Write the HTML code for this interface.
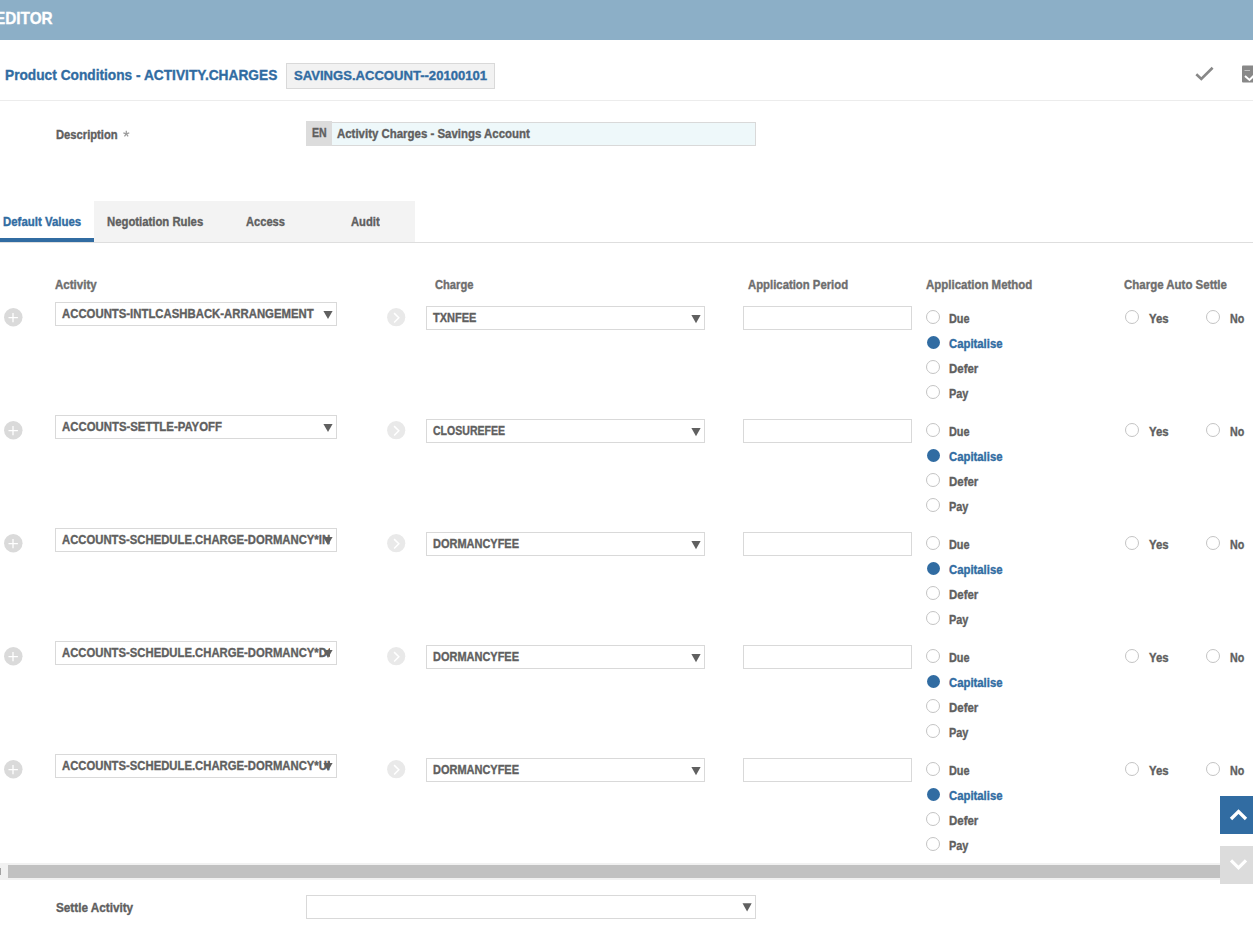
<!DOCTYPE html>
<html><head><meta charset="utf-8"><title>Editor</title><style>
*{margin:0;padding:0;box-sizing:border-box}
html,body{width:1253px;height:931px;overflow:hidden;background:#fff}
body{position:relative;font-family:"Liberation Sans",sans-serif;font-weight:bold;font-size:12px;color:#5a5a5a}
.a{position:absolute;white-space:nowrap}
.t{position:absolute;white-space:nowrap;line-height:1;-webkit-text-stroke:0.35px currentColor}
.hdr{left:0;top:0;width:1253px;height:40px;background:#8baec6}
.box{position:absolute;border:1px solid #d9d9d9;background:#fff}
.tri{position:absolute;width:0;height:0;border-left:4.6px solid transparent;border-right:4.6px solid transparent;border-top:7.8px solid #5e5e5e}
.rad{position:absolute;width:14px;height:14px;border-radius:50%;border:1px solid #c4c4c4;background:#fff}
.radf{position:absolute;width:13px;height:13px;border-radius:50%;background:#316ca2}
.plus{position:absolute;width:18px;height:18px;border-radius:50%;background:#dadada}
.plus:before{content:"";position:absolute;left:4.5px;top:8px;width:9px;height:2px;background:#fff}
.plus:after{content:"";position:absolute;left:8px;top:4.5px;width:2px;height:9px;background:#fff}
.chev{position:absolute;width:18px;height:18px;border-radius:50%;background:#e9e9e9}
</style></head><body>
<div class="a" style="left:0px;top:0px;width:1253px;height:40px;background:#8cafc7"></div>
<div class="t" style="left:-5.20px;top:10.41px;font-size:17px;color:#fff;transform:scaleX(0.9014);transform-origin:0 0;">EDITOR</div>
<div class="t" style="left:5.40px;top:66.90px;font-size:15px;color:#316ca2;transform:scaleX(0.9144);transform-origin:0 0;">Product Conditions - ACTIVITY.CHARGES</div>
<div class="a" style="left:286px;top:63px;width:209px;height:26px;background:#f2f2f2;border:1px solid #d9d9d9"></div>
<div class="t" style="left:294.00px;top:69.10px;font-size:13px;color:#316ca2;transform:scaleX(1.0057);transform-origin:0 0;">SAVINGS.ACCOUNT--20100101</div>
<div class="a" style="left:0px;top:100px;width:1253px;height:1px;background:#ececec"></div>
<svg class="a" style="left:1190px;top:62px" width="30" height="24" viewBox="0 0 30 24"><path d="M6.3 12.3 L11.3 16.9 L22.6 5.8" fill="none" stroke="#888" stroke-width="2.6"/></svg>
<svg class="a" style="left:1240px;top:64px" width="13" height="20" viewBox="0 0 13 20"><rect x="2" y="1.5" width="14" height="17" rx="1" fill="#888"/><path d="M4.5 6.5 H10" stroke="#fff" stroke-width="0.8" opacity="0.6"/><path d="M5 12 L9.5 16 L14 11.5" fill="none" stroke="#fff" stroke-width="2"/></svg>
<div class="t" style="left:56.30px;top:129.44px;font-size:12px;color:#5f5f5f;transform:scaleX(0.9333);transform-origin:0 0;">Description</div>
<svg class="a" style="left:120px;top:128px" width="12" height="12" viewBox="0 0 12 12"><g transform="translate(6.3 5.9)" stroke="#9c9c9c" stroke-width="1.25" stroke-linecap="butt"><path d="M0 0V-3.1M0 0L2.95 -0.96M0 0L1.82 2.5M0 0L-1.82 2.5M0 0L-2.95 -0.96"/></g></svg>
<div class="a" style="left:306px;top:121px;width:26px;height:25px;background:#dcdcdc"></div>
<div class="t" style="left:312.20px;top:127.44px;font-size:12px;color:#5f5f5f;transform:scaleX(0.8802);transform-origin:0 0;">EN</div>
<div class="a" style="left:332px;top:122px;width:424px;height:24px;background:#eef8fa;border:1px solid #d9d9d9;border-left:0"></div>
<div class="t" style="left:337.20px;top:128.04px;font-size:12px;color:#5f5f5f;transform:scaleX(0.9530);transform-origin:0 0;">Activity Charges - Savings Account</div>
<div class="a" style="left:94px;top:201px;width:321px;height:41px;background:#f3f3f3"></div>
<div class="a" style="left:0px;top:242px;width:1253px;height:1px;background:#dedede"></div>
<div class="a" style="left:0px;top:238px;width:94px;height:4px;background:#316ca2"></div>
<div class="t" style="left:2.90px;top:216.44px;font-size:12px;color:#316ca2;transform:scaleX(0.9524);transform-origin:0 0;">Default Values</div>
<div class="t" style="left:106.60px;top:216.44px;font-size:12px;color:#5f5f5f;transform:scaleX(0.9431);transform-origin:0 0;">Negotiation Rules</div>
<div class="t" style="left:246.00px;top:216.44px;font-size:12px;color:#5f5f5f;transform:scaleX(0.9262);transform-origin:0 0;">Access</div>
<div class="t" style="left:351.30px;top:216.44px;font-size:12px;color:#5f5f5f;transform:scaleX(0.9349);transform-origin:0 0;">Audit</div>
<div class="t" style="left:55.10px;top:279.44px;font-size:12px;color:#6e6e6e;transform:scaleX(0.9608);transform-origin:0 0;">Activity</div>
<div class="t" style="left:435.20px;top:279.44px;font-size:12px;color:#6e6e6e;transform:scaleX(0.9298);transform-origin:0 0;">Charge</div>
<div class="t" style="left:748.40px;top:279.44px;font-size:12px;color:#6e6e6e;transform:scaleX(0.9443);transform-origin:0 0;">Application Period</div>
<div class="t" style="left:926.30px;top:279.44px;font-size:12px;color:#6e6e6e;transform:scaleX(0.9551);transform-origin:0 0;">Application Method</div>
<div class="t" style="left:1123.50px;top:279.44px;font-size:12px;color:#6e6e6e;transform:scaleX(0.9563);transform-origin:0 0;">Charge Auto Settle</div>
<svg class="a" style="left:4.4px;top:308.1px" width="19" height="19" viewBox="0 0 19 19"><circle cx="9.3" cy="9.3" r="9.25" fill="#dadada"/><path d="M4.5 9.6 H13.9 M9.0 4.9 V14.3" fill="none" stroke="#fff" stroke-width="1.3"/></svg>
<div class="box" style="left:55px;top:302px;width:282px;height:24px;overflow:hidden"></div>
<div class="a" style="left:56px;top:306.24px;width:274px;height:16px;overflow:hidden"><div class="t" style="left:61.90px;top:308.24px;font-size:12px;color:#5f5f5f;transform:scaleX(0.9462);transform-origin:0 0;left:5.90px;top:2px">ACCOUNTS-INTLCASHBACK-ARRANGEMENT</div></div>
<svg class="a" style="left:323px;top:310px" width="11" height="10"><polygon points="0.40,0.90 9.60,0.90 5.00,9.10" fill="#606060"/></svg>
<svg class="a" style="left:386.6px;top:308.1px" width="19" height="19" viewBox="0 0 19 19"><circle cx="9.2" cy="9.2" r="9.1" fill="#e9e9e9"/><path d="M7.1 5.1 L11.8 9.8 L7.1 14.5" fill="none" stroke="#fff" stroke-width="1.5"/></svg>
<div class="box" style="left:426px;top:306px;width:279px;height:24px"></div>
<div class="t" style="left:433.40px;top:312.34px;font-size:12px;color:#5f5f5f;transform:scaleX(0.9154);transform-origin:0 0;">TXNFEE</div>
<svg class="a" style="left:691px;top:315px" width="11" height="10"><polygon points="0.40,0.10 9.60,0.10 5.00,8.30" fill="#606060"/></svg>
<div class="box" style="left:743px;top:306px;width:169px;height:24px"></div>
<div class="rad" style="left:926px;top:310px"></div>
<div class="t" style="left:949.40px;top:312.94px;font-size:12px;color:#5f5f5f;transform:scaleX(0.9075);transform-origin:0 0;">Due</div>
<div class="radf" style="left:926.5px;top:335.5px"></div>
<div class="t" style="left:949.40px;top:337.94px;font-size:12px;color:#316ca2;transform:scaleX(0.9436);transform-origin:0 0;">Capitalise</div>
<div class="rad" style="left:926px;top:360px"></div>
<div class="t" style="left:949.40px;top:362.94px;font-size:12px;color:#5f5f5f;transform:scaleX(0.9544);transform-origin:0 0;">Defer</div>
<div class="rad" style="left:926px;top:385px"></div>
<div class="t" style="left:949.40px;top:387.94px;font-size:12px;color:#5f5f5f;transform:scaleX(0.9112);transform-origin:0 0;">Pay</div>
<div class="rad" style="left:1125px;top:310px"></div>
<div class="t" style="left:1148.60px;top:312.94px;font-size:12px;color:#5f5f5f;transform:scaleX(0.9469);transform-origin:0 0;">Yes</div>
<div class="rad" style="left:1206px;top:310px"></div>
<div class="t" style="left:1229.80px;top:312.94px;font-size:12px;color:#5f5f5f;transform:scaleX(0.8938);transform-origin:0 0;">No</div>
<svg class="a" style="left:4.4px;top:421.1px" width="19" height="19" viewBox="0 0 19 19"><circle cx="9.3" cy="9.3" r="9.25" fill="#dadada"/><path d="M4.5 9.6 H13.9 M9.0 4.9 V14.3" fill="none" stroke="#fff" stroke-width="1.3"/></svg>
<div class="box" style="left:55px;top:415px;width:282px;height:24px;overflow:hidden"></div>
<div class="a" style="left:56px;top:419.24px;width:274px;height:16px;overflow:hidden"><div class="t" style="left:61.90px;top:421.24px;font-size:12px;color:#5f5f5f;transform:scaleX(0.9484);transform-origin:0 0;left:5.90px;top:2px">ACCOUNTS-SETTLE-PAYOFF</div></div>
<svg class="a" style="left:323px;top:423px" width="11" height="10"><polygon points="0.40,0.90 9.60,0.90 5.00,9.10" fill="#606060"/></svg>
<svg class="a" style="left:386.6px;top:421.1px" width="19" height="19" viewBox="0 0 19 19"><circle cx="9.2" cy="9.2" r="9.1" fill="#e9e9e9"/><path d="M7.1 5.1 L11.8 9.8 L7.1 14.5" fill="none" stroke="#fff" stroke-width="1.5"/></svg>
<div class="box" style="left:426px;top:419px;width:279px;height:24px"></div>
<div class="t" style="left:433.40px;top:425.34px;font-size:12px;color:#5f5f5f;transform:scaleX(0.8780);transform-origin:0 0;">CLOSUREFEE</div>
<svg class="a" style="left:691px;top:428px" width="11" height="10"><polygon points="0.40,0.10 9.60,0.10 5.00,8.30" fill="#606060"/></svg>
<div class="box" style="left:743px;top:419px;width:169px;height:24px"></div>
<div class="rad" style="left:926px;top:423px"></div>
<div class="t" style="left:949.40px;top:425.94px;font-size:12px;color:#5f5f5f;transform:scaleX(0.9075);transform-origin:0 0;">Due</div>
<div class="radf" style="left:926.5px;top:448.5px"></div>
<div class="t" style="left:949.40px;top:450.94px;font-size:12px;color:#316ca2;transform:scaleX(0.9436);transform-origin:0 0;">Capitalise</div>
<div class="rad" style="left:926px;top:473px"></div>
<div class="t" style="left:949.40px;top:475.94px;font-size:12px;color:#5f5f5f;transform:scaleX(0.9544);transform-origin:0 0;">Defer</div>
<div class="rad" style="left:926px;top:498px"></div>
<div class="t" style="left:949.40px;top:500.94px;font-size:12px;color:#5f5f5f;transform:scaleX(0.9112);transform-origin:0 0;">Pay</div>
<div class="rad" style="left:1125px;top:423px"></div>
<div class="t" style="left:1148.60px;top:425.94px;font-size:12px;color:#5f5f5f;transform:scaleX(0.9469);transform-origin:0 0;">Yes</div>
<div class="rad" style="left:1206px;top:423px"></div>
<div class="t" style="left:1229.80px;top:425.94px;font-size:12px;color:#5f5f5f;transform:scaleX(0.8938);transform-origin:0 0;">No</div>
<svg class="a" style="left:4.4px;top:534.1px" width="19" height="19" viewBox="0 0 19 19"><circle cx="9.3" cy="9.3" r="9.25" fill="#dadada"/><path d="M4.5 9.6 H13.9 M9.0 4.9 V14.3" fill="none" stroke="#fff" stroke-width="1.3"/></svg>
<div class="box" style="left:55px;top:528px;width:282px;height:24px;overflow:hidden"></div>
<div class="a" style="left:56px;top:532.24px;width:274px;height:16px;overflow:hidden"><div class="t" style="left:61.90px;top:534.24px;font-size:12px;color:#5f5f5f;transform:scaleX(0.9417);transform-origin:0 0;left:5.90px;top:2px">ACCOUNTS-SCHEDULE.CHARGE-DORMANCY*INT</div></div>
<svg class="a" style="left:323px;top:536px" width="11" height="10"><polygon points="0.40,0.90 9.60,0.90 5.00,9.10" fill="#606060"/></svg>
<svg class="a" style="left:386.6px;top:534.1px" width="19" height="19" viewBox="0 0 19 19"><circle cx="9.2" cy="9.2" r="9.1" fill="#e9e9e9"/><path d="M7.1 5.1 L11.8 9.8 L7.1 14.5" fill="none" stroke="#fff" stroke-width="1.5"/></svg>
<div class="box" style="left:426px;top:532px;width:279px;height:24px"></div>
<div class="t" style="left:433.40px;top:538.34px;font-size:12px;color:#5f5f5f;transform:scaleX(0.9149);transform-origin:0 0;">DORMANCYFEE</div>
<svg class="a" style="left:691px;top:541px" width="11" height="10"><polygon points="0.40,0.10 9.60,0.10 5.00,8.30" fill="#606060"/></svg>
<div class="box" style="left:743px;top:532px;width:169px;height:24px"></div>
<div class="rad" style="left:926px;top:536px"></div>
<div class="t" style="left:949.40px;top:538.94px;font-size:12px;color:#5f5f5f;transform:scaleX(0.9075);transform-origin:0 0;">Due</div>
<div class="radf" style="left:926.5px;top:561.5px"></div>
<div class="t" style="left:949.40px;top:563.94px;font-size:12px;color:#316ca2;transform:scaleX(0.9436);transform-origin:0 0;">Capitalise</div>
<div class="rad" style="left:926px;top:586px"></div>
<div class="t" style="left:949.40px;top:588.94px;font-size:12px;color:#5f5f5f;transform:scaleX(0.9544);transform-origin:0 0;">Defer</div>
<div class="rad" style="left:926px;top:611px"></div>
<div class="t" style="left:949.40px;top:613.94px;font-size:12px;color:#5f5f5f;transform:scaleX(0.9112);transform-origin:0 0;">Pay</div>
<div class="rad" style="left:1125px;top:536px"></div>
<div class="t" style="left:1148.60px;top:538.94px;font-size:12px;color:#5f5f5f;transform:scaleX(0.9469);transform-origin:0 0;">Yes</div>
<div class="rad" style="left:1206px;top:536px"></div>
<div class="t" style="left:1229.80px;top:538.94px;font-size:12px;color:#5f5f5f;transform:scaleX(0.8938);transform-origin:0 0;">No</div>
<svg class="a" style="left:4.4px;top:647.1px" width="19" height="19" viewBox="0 0 19 19"><circle cx="9.3" cy="9.3" r="9.25" fill="#dadada"/><path d="M4.5 9.6 H13.9 M9.0 4.9 V14.3" fill="none" stroke="#fff" stroke-width="1.3"/></svg>
<div class="box" style="left:55px;top:641px;width:282px;height:24px;overflow:hidden"></div>
<div class="a" style="left:56px;top:645.24px;width:274px;height:16px;overflow:hidden"><div class="t" style="left:61.90px;top:647.24px;font-size:12px;color:#5f5f5f;transform:scaleX(0.9417);transform-origin:0 0;left:5.90px;top:2px">ACCOUNTS-SCHEDULE.CHARGE-DORMANCY*DOR</div></div>
<svg class="a" style="left:323px;top:649px" width="11" height="10"><polygon points="0.40,0.90 9.60,0.90 5.00,9.10" fill="#606060"/></svg>
<svg class="a" style="left:386.6px;top:647.1px" width="19" height="19" viewBox="0 0 19 19"><circle cx="9.2" cy="9.2" r="9.1" fill="#e9e9e9"/><path d="M7.1 5.1 L11.8 9.8 L7.1 14.5" fill="none" stroke="#fff" stroke-width="1.5"/></svg>
<div class="box" style="left:426px;top:645px;width:279px;height:24px"></div>
<div class="t" style="left:433.40px;top:651.34px;font-size:12px;color:#5f5f5f;transform:scaleX(0.9149);transform-origin:0 0;">DORMANCYFEE</div>
<svg class="a" style="left:691px;top:654px" width="11" height="10"><polygon points="0.40,0.10 9.60,0.10 5.00,8.30" fill="#606060"/></svg>
<div class="box" style="left:743px;top:645px;width:169px;height:24px"></div>
<div class="rad" style="left:926px;top:649px"></div>
<div class="t" style="left:949.40px;top:651.94px;font-size:12px;color:#5f5f5f;transform:scaleX(0.9075);transform-origin:0 0;">Due</div>
<div class="radf" style="left:926.5px;top:674.5px"></div>
<div class="t" style="left:949.40px;top:676.94px;font-size:12px;color:#316ca2;transform:scaleX(0.9436);transform-origin:0 0;">Capitalise</div>
<div class="rad" style="left:926px;top:699px"></div>
<div class="t" style="left:949.40px;top:701.94px;font-size:12px;color:#5f5f5f;transform:scaleX(0.9544);transform-origin:0 0;">Defer</div>
<div class="rad" style="left:926px;top:724px"></div>
<div class="t" style="left:949.40px;top:726.94px;font-size:12px;color:#5f5f5f;transform:scaleX(0.9112);transform-origin:0 0;">Pay</div>
<div class="rad" style="left:1125px;top:649px"></div>
<div class="t" style="left:1148.60px;top:651.94px;font-size:12px;color:#5f5f5f;transform:scaleX(0.9469);transform-origin:0 0;">Yes</div>
<div class="rad" style="left:1206px;top:649px"></div>
<div class="t" style="left:1229.80px;top:651.94px;font-size:12px;color:#5f5f5f;transform:scaleX(0.8938);transform-origin:0 0;">No</div>
<svg class="a" style="left:4.4px;top:760.1px" width="19" height="19" viewBox="0 0 19 19"><circle cx="9.3" cy="9.3" r="9.25" fill="#dadada"/><path d="M4.5 9.6 H13.9 M9.0 4.9 V14.3" fill="none" stroke="#fff" stroke-width="1.3"/></svg>
<div class="box" style="left:55px;top:754px;width:282px;height:24px;overflow:hidden"></div>
<div class="a" style="left:56px;top:758.24px;width:274px;height:16px;overflow:hidden"><div class="t" style="left:61.90px;top:760.24px;font-size:12px;color:#5f5f5f;transform:scaleX(0.9417);transform-origin:0 0;left:5.90px;top:2px">ACCOUNTS-SCHEDULE.CHARGE-DORMANCY*UNC</div></div>
<svg class="a" style="left:323px;top:762px" width="11" height="10"><polygon points="0.40,0.90 9.60,0.90 5.00,9.10" fill="#606060"/></svg>
<svg class="a" style="left:386.6px;top:760.1px" width="19" height="19" viewBox="0 0 19 19"><circle cx="9.2" cy="9.2" r="9.1" fill="#e9e9e9"/><path d="M7.1 5.1 L11.8 9.8 L7.1 14.5" fill="none" stroke="#fff" stroke-width="1.5"/></svg>
<div class="box" style="left:426px;top:758px;width:279px;height:24px"></div>
<div class="t" style="left:433.40px;top:764.34px;font-size:12px;color:#5f5f5f;transform:scaleX(0.9149);transform-origin:0 0;">DORMANCYFEE</div>
<svg class="a" style="left:691px;top:767px" width="11" height="10"><polygon points="0.40,0.10 9.60,0.10 5.00,8.30" fill="#606060"/></svg>
<div class="box" style="left:743px;top:758px;width:169px;height:24px"></div>
<div class="rad" style="left:926px;top:762px"></div>
<div class="t" style="left:949.40px;top:764.94px;font-size:12px;color:#5f5f5f;transform:scaleX(0.9075);transform-origin:0 0;">Due</div>
<div class="radf" style="left:926.5px;top:787.5px"></div>
<div class="t" style="left:949.40px;top:789.94px;font-size:12px;color:#316ca2;transform:scaleX(0.9436);transform-origin:0 0;">Capitalise</div>
<div class="rad" style="left:926px;top:812px"></div>
<div class="t" style="left:949.40px;top:814.94px;font-size:12px;color:#5f5f5f;transform:scaleX(0.9544);transform-origin:0 0;">Defer</div>
<div class="rad" style="left:926px;top:837px"></div>
<div class="t" style="left:949.40px;top:839.94px;font-size:12px;color:#5f5f5f;transform:scaleX(0.9112);transform-origin:0 0;">Pay</div>
<div class="rad" style="left:1125px;top:762px"></div>
<div class="t" style="left:1148.60px;top:764.94px;font-size:12px;color:#5f5f5f;transform:scaleX(0.9469);transform-origin:0 0;">Yes</div>
<div class="rad" style="left:1206px;top:762px"></div>
<div class="t" style="left:1229.80px;top:764.94px;font-size:12px;color:#5f5f5f;transform:scaleX(0.8938);transform-origin:0 0;">No</div>
<div class="a" style="left:0px;top:863px;width:1253px;height:17px;background:#f1f1f1"></div>
<div class="a" style="left:8px;top:865px;width:1245px;height:13px;background:#c1c1c1"></div>
<div class="a" style="left:0px;top:868px;width:1px;height:7px;background:#a3a3a3"></div>
<div class="a" style="left:1220px;top:796px;width:33px;height:38px;background:#316ca2"></div>
<svg class="a" style="left:1220px;top:796px" width="33" height="38" viewBox="0 0 33 38"><path d="M11 23 L18.5 15.5 L26 23" fill="none" stroke="#fff" stroke-width="3.3"/></svg>
<div class="a" style="left:1220px;top:846px;width:33px;height:38px;background:#dcdcdc"></div>
<svg class="a" style="left:1220px;top:846px" width="33" height="38" viewBox="0 0 33 38"><path d="M11 14.4 L18.5 21.8 L26 14.4" fill="none" stroke="#fff" stroke-width="3.3"/></svg>
<div class="t" style="left:56.30px;top:902.44px;font-size:12px;color:#5f5f5f;transform:scaleX(0.9772);transform-origin:0 0;">Settle Activity</div>
<div class="box" style="left:306px;top:895px;width:450px;height:24px"></div>
<svg class="a" style="left:742px;top:903px" width="11" height="10"><polygon points="0.50,0.20 9.70,0.20 5.10,8.40" fill="#606060"/></svg>
</body></html>
